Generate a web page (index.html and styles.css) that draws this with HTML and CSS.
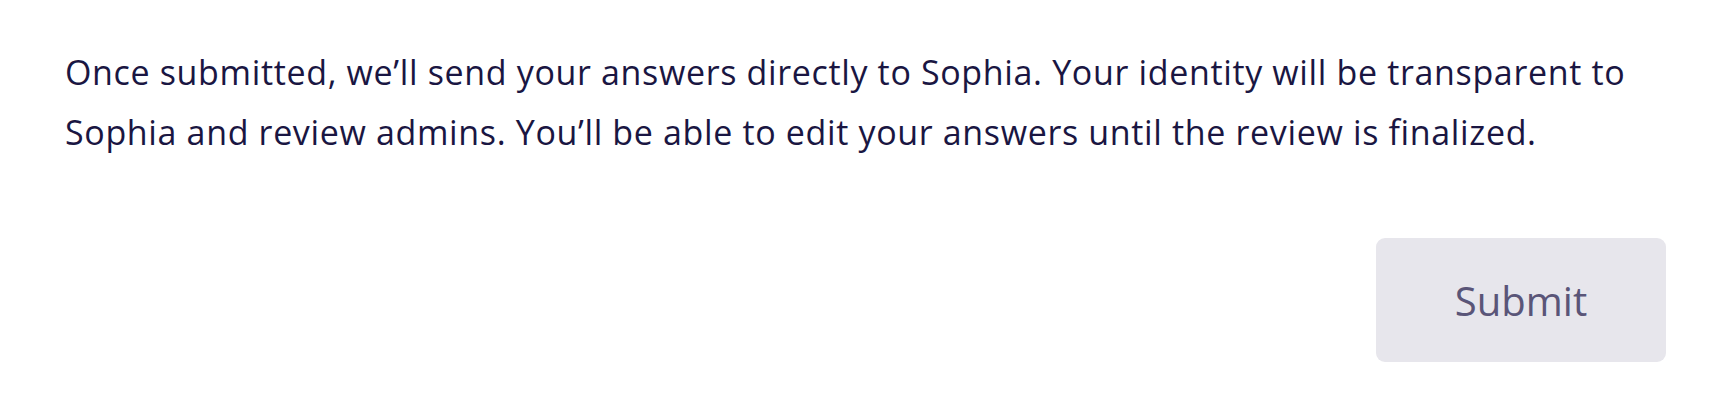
FILE: index.html
```html
<!DOCTYPE html>
<html lang="en">
<head>
    <meta charset="UTF-8">
    <meta name="viewport" content="width=device-width, initial-scale=1.0">
    <title>Submit review</title>
    <link rel="stylesheet" href="styles.css">
</head>
<body>

<div class="submit-panel">
    <p class="submit-note">Once submitted, we’ll send your answers directly to Sophia. Your identity will be transparent to Sophia and review admins. You’ll be able to edit your answers until the review is finalized.</p>
    <div class="submit-actions">
        <button type="submit" class="submit-button" disabled>Submit</button>
    </div>
</div>

</body>
</html>
```

FILE: styles.css
```css
body {
    font-family: "Open Sans", sans-serif;
    background-color: #ffffff;
    color: #1a1642;
    margin: 0;
}
.submit-panel {
    padding: 42px 68px 0 65px;
}
.submit-note {
    font-size: 34px;
    line-height: 60px;
    letter-spacing: 0.65px;
    margin: 0;
}
.submit-actions {
    display: flex;
    justify-content: flex-end;
    margin-top: 76px;
}
.submit-button {
    width: 290px;
    height: 124px;
    border: none;
    border-radius: 9px;
    background-color: #e7e6ec;
    color: #5a5578;
    font-family: "Open Sans", sans-serif;
    font-size: 40px;
    cursor: default;
}
```
